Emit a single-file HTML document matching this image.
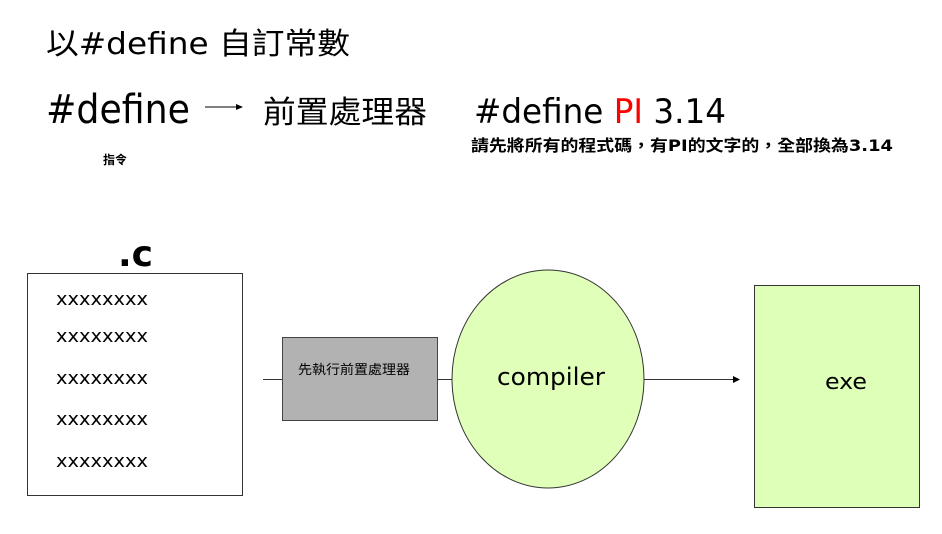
<!DOCTYPE html>
<html><head><meta charset="utf-8"><style>
html,body{margin:0;padding:0;background:#fff;width:942px;height:534px;overflow:hidden}
svg text{font-family:"DejaVu Sans","Noto Sans CJK TC",sans-serif;fill:#000}
</style></head><body>
<svg width="942" height="534" viewBox="0 0 942 534" xmlns="http://www.w3.org/2000/svg">
<text x="46" y="54" font-size="30" textLength="304" lengthAdjust="spacingAndGlyphs">以#define 自訂常數</text>
<text x="46" y="123" font-size="40" textLength="144" lengthAdjust="spacingAndGlyphs">#define</text>
<line x1="205" y1="107" x2="238" y2="107" stroke="#000" stroke-width="1"/>
<path d="M236 104 L243 107 L236 110 Z" fill="#000"/>
<text x="263" y="123" font-size="31" textLength="164" lengthAdjust="spacingAndGlyphs">前置處理器</text>
<text x="474" y="123" font-size="34" textLength="252" lengthAdjust="spacingAndGlyphs">#define <tspan fill="#ff0000">PI</tspan> 3.14</text>
<text x="471" y="151" font-size="16" font-weight="bold" textLength="422" lengthAdjust="spacingAndGlyphs">請先將所有的程式碼，有PI的文字的，全部換為3.14</text>
<text x="103" y="164" font-size="12" font-weight="bold">指令</text>
<text x="118" y="266" font-size="36" font-weight="bold">.c</text>
<rect x="27.5" y="273.5" width="215" height="222" fill="#fff" stroke="#333"/>
<g font-size="18">
<text x="56" y="305" textLength="92" lengthAdjust="spacingAndGlyphs">xxxxxxxx</text>
<text x="56" y="342" textLength="92" lengthAdjust="spacingAndGlyphs">xxxxxxxx</text>
<text x="56" y="384" textLength="92" lengthAdjust="spacingAndGlyphs">xxxxxxxx</text>
<text x="56" y="425" textLength="92" lengthAdjust="spacingAndGlyphs">xxxxxxxx</text>
<text x="56" y="467" textLength="92" lengthAdjust="spacingAndGlyphs">xxxxxxxx</text>
</g>
<line x1="263" y1="379.5" x2="282" y2="379.5" stroke="#333"/>
<rect x="282.5" y="337.5" width="155" height="83" fill="#b2b2b2" stroke="#444"/>
<text x="298" y="374" font-size="13" textLength="112" lengthAdjust="spacingAndGlyphs">先執行前置處理器</text>
<line x1="437" y1="379.5" x2="453" y2="379.5" stroke="#333"/>
<ellipse cx="548" cy="379" rx="96" ry="109" fill="#e0ffb8" stroke="#333"/>
<text x="497" y="385" font-size="24" textLength="108" lengthAdjust="spacingAndGlyphs">compiler</text>
<line x1="644" y1="379.5" x2="734" y2="379.5" stroke="#333"/>
<path d="M733 376 L740 379.5 L733 383 Z" fill="#000"/>
<rect x="754.5" y="285.5" width="165" height="222" fill="#ddffb8" stroke="#333"/>
<text x="825" y="389" font-size="22" textLength="42" lengthAdjust="spacingAndGlyphs">exe</text>
</svg>
</body></html>
